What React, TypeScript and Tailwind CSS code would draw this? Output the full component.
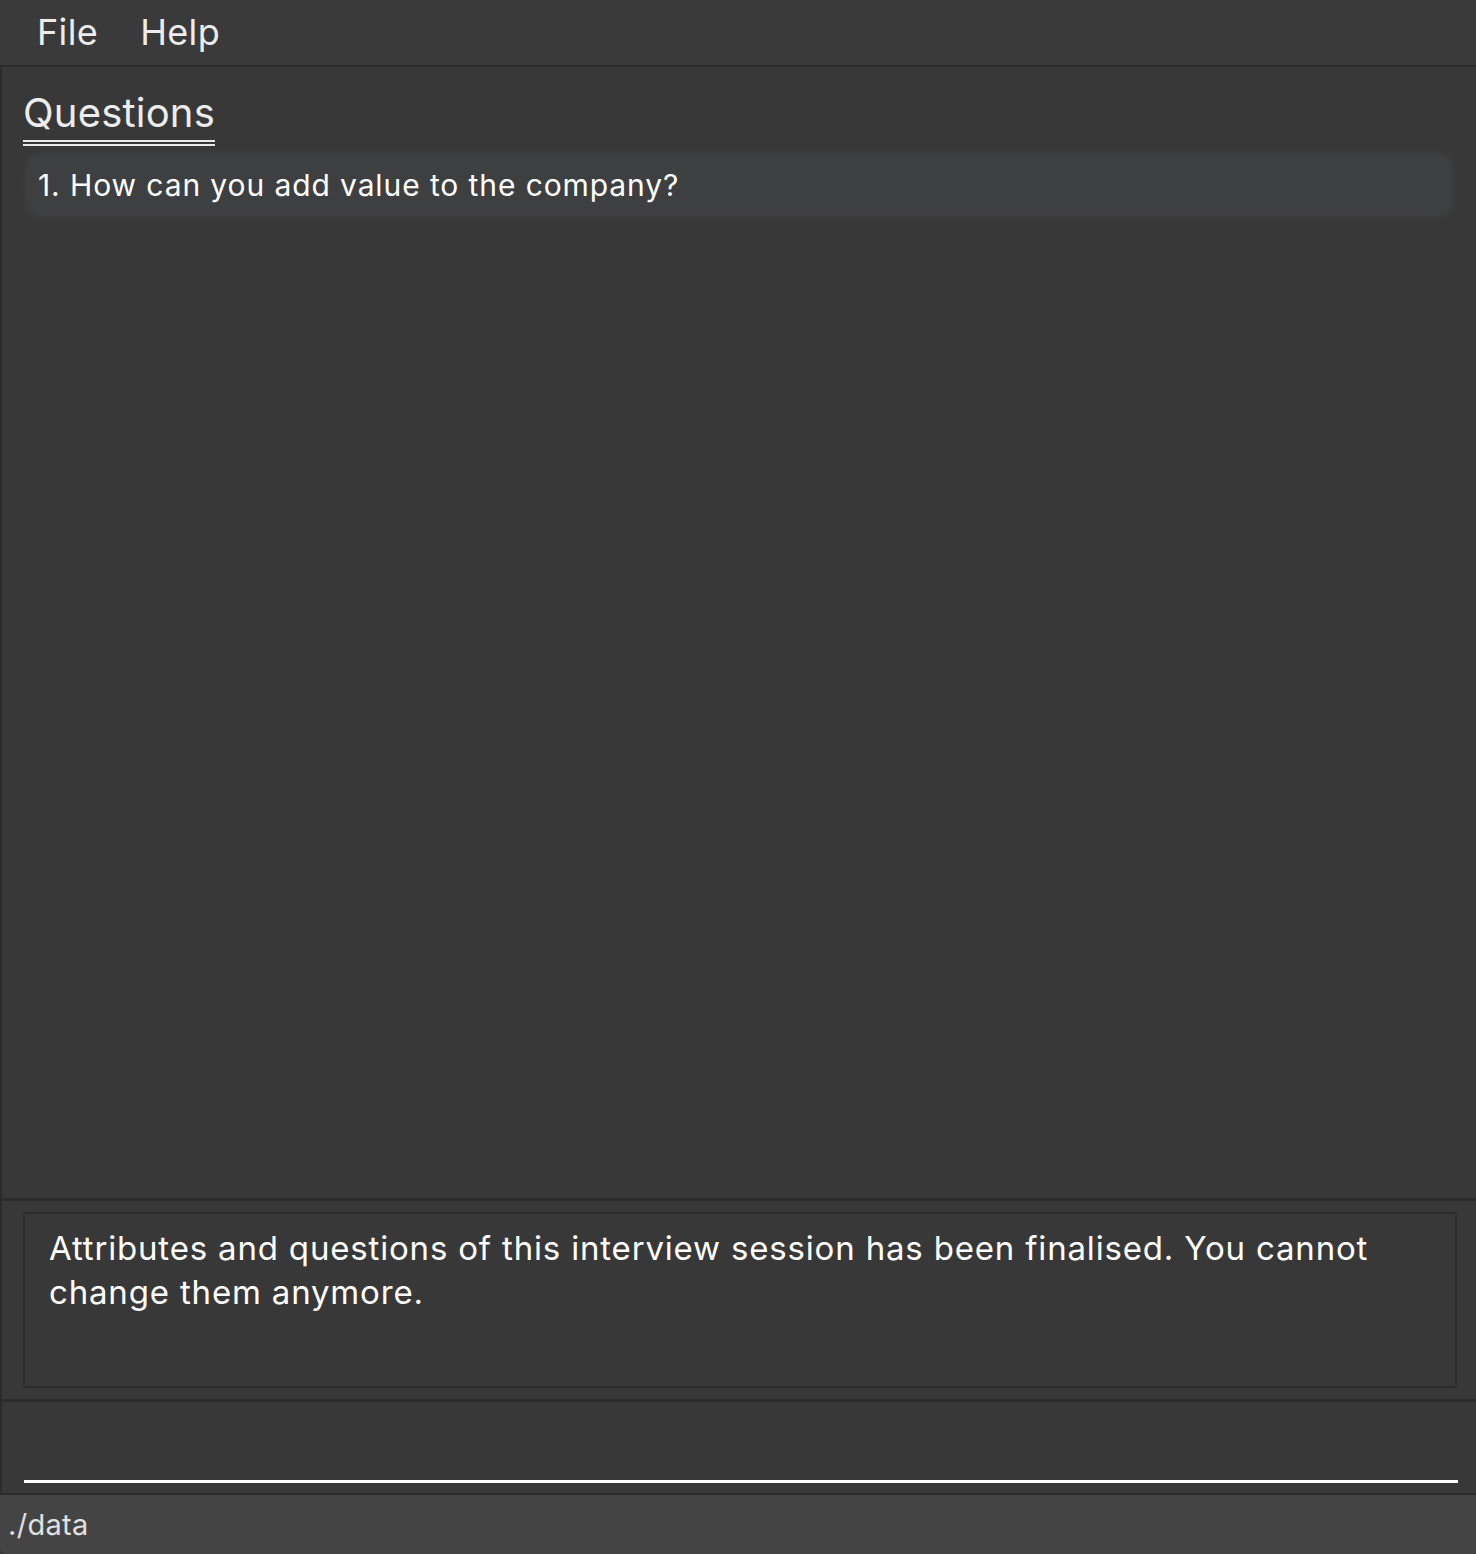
export default function App() {
  return (
    <div
      className="flex h-[1554px] w-[1476px] flex-col bg-[#383838] text-white"
      style={{ fontFamily: 'Inter, "Open Sans", sans-serif' }}
    >
      {/* menu bar */}
      <div className="flex h-[67px] shrink-0 items-center gap-[42px] border-b-2 border-[#2c2c2c] bg-[#3a3a3a] pl-[37px] pb-[2px] text-[36px] tracking-[0.01em] text-[#ececec]">
        <span>File</span>
        <span>Help</span>
      </div>

      <div className="flex flex-1 flex-col border-l-2 border-[#2c2c2c]">
        {/* question list */}
        <div className="flex-1 pl-[21px] pr-[21px] pt-[22px]">
          <div className="inline-block border-b-[6px] border-double border-[#e8e8e8] pb-[3px] text-[40px] leading-[48px] tracking-[0.005em] text-[#ececec]">
            Questions
          </div>
          <div className="mt-[12px] ml-[7px] mr-[7px] flex h-[54px] items-center rounded-[10px] bg-[#3e3f41] pl-[8px] pt-[1px] text-[30px] tracking-[0.03em] shadow-[0_0_8px_3px_#444547]">
            1. How can you add value to the company?
          </div>
        </div>

        {/* result display */}
        <div className="shrink-0 border-t-[3px] border-[#2c2c2c] pl-[21px] pr-[19px] pt-[11px] pb-[11px]">
          <div className="h-[176px] border-2 border-[#2c2c2c] px-[24px] pt-[12px] text-[33px] leading-[44px] tracking-[0.025em] text-white">
            Attributes and questions of this interview session has been finalised. You cannot
            change them anymore.
          </div>
        </div>

        {/* command box */}
        <div className="flex h-[96px] shrink-0 flex-col justify-end border-t-[3px] border-b-[2px] border-[#2c2c2c] pl-[22px] pr-[18px] pb-[10px]">
          <div className="h-[3px] bg-white" />
        </div>
      </div>

      {/* status bar */}
      <div className="flex h-[59px] shrink-0 items-center rounded-bl-[6px] bg-[#444444] pl-[8px] text-[29px] tracking-[0.01em] text-[#e0e0e0]">
        ./data
      </div>
    </div>
  )
}
